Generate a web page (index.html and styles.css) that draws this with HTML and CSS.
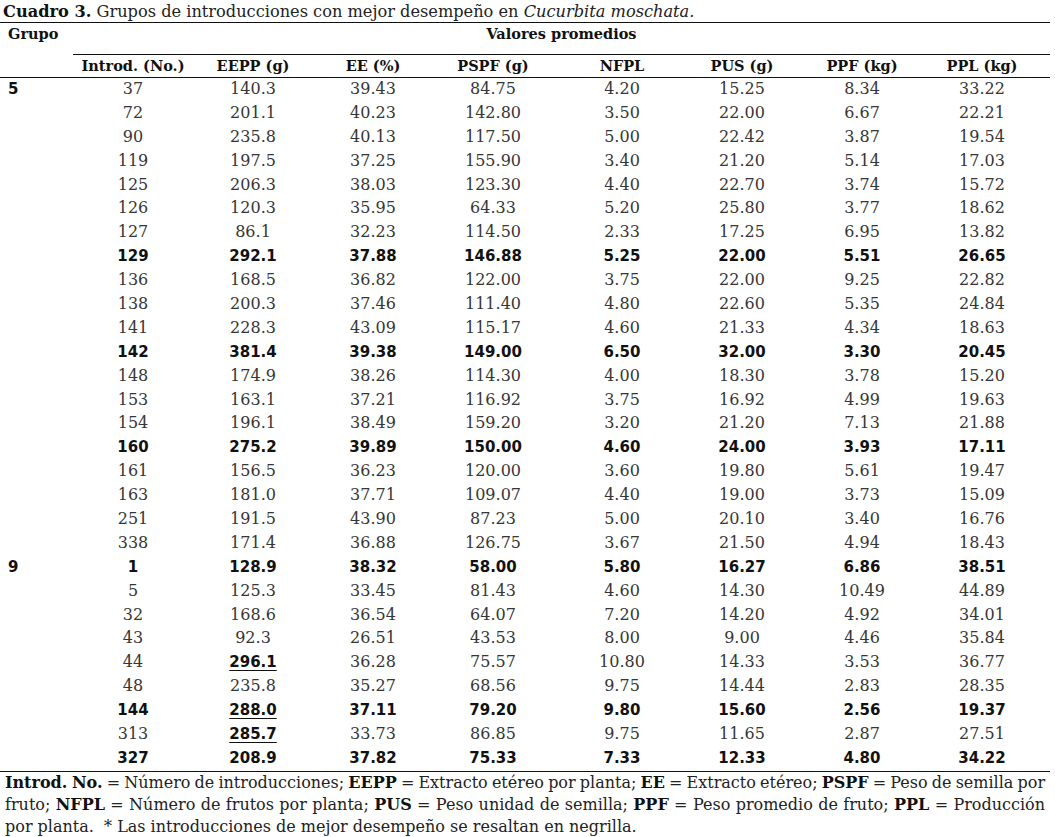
FILE: index.html
```html
<!DOCTYPE html>
<html lang="es">
<head>
<meta charset="utf-8">
<title>Cuadro 3</title>
<link rel="stylesheet" href="styles.css">
</head>
<body>
<div class="page">
  <p class="caption"><b>Cuadro 3.</b> Grupos de introducciones con mejor desempeño en <i>Cucurbita moschata.</i></p>
  <div class="head">
    <div class="grupo">Grupo</div>
    <div class="vp">Valores promedios</div>
    <div class="hc c1">Introd. (No.)</div>
    <div class="hc">EEPP (g)</div>
    <div class="hc">EE (%)</div>
    <div class="hc">PSPF (g)</div>
    <div class="hc sh">NFPL</div>
    <div class="hc">PUS (g)</div>
    <div class="hc">PPF (kg)</div>
    <div class="hc">PPL (kg)</div>
  </div>
  <div class="body">
    <div class="row"><span class="g">5</span><span>37</span><span>140.3</span><span>39.43</span><span>84.75</span><span>4.20</span><span>15.25</span><span>8.34</span><span>33.22</span></div>
    <div class="row"><span class="g"></span><span>72</span><span>201.1</span><span>40.23</span><span>142.80</span><span>3.50</span><span>22.00</span><span>6.67</span><span>22.21</span></div>
    <div class="row"><span class="g"></span><span>90</span><span>235.8</span><span>40.13</span><span>117.50</span><span>5.00</span><span>22.42</span><span>3.87</span><span>19.54</span></div>
    <div class="row"><span class="g"></span><span>119</span><span>197.5</span><span>37.25</span><span>155.90</span><span>3.40</span><span>21.20</span><span>5.14</span><span>17.03</span></div>
    <div class="row"><span class="g"></span><span>125</span><span>206.3</span><span>38.03</span><span>123.30</span><span>4.40</span><span>22.70</span><span>3.74</span><span>15.72</span></div>
    <div class="row"><span class="g"></span><span>126</span><span>120.3</span><span>35.95</span><span>64.33</span><span>5.20</span><span>25.80</span><span>3.77</span><span>18.62</span></div>
    <div class="row"><span class="g"></span><span>127</span><span>86.1</span><span>32.23</span><span>114.50</span><span>2.33</span><span>17.25</span><span>6.95</span><span>13.82</span></div>
    <div class="row b"><span class="g"></span><span>129</span><span>292.1</span><span>37.88</span><span>146.88</span><span>5.25</span><span>22.00</span><span>5.51</span><span>26.65</span></div>
    <div class="row"><span class="g"></span><span>136</span><span>168.5</span><span>36.82</span><span>122.00</span><span>3.75</span><span>22.00</span><span>9.25</span><span>22.82</span></div>
    <div class="row"><span class="g"></span><span>138</span><span>200.3</span><span>37.46</span><span>111.40</span><span>4.80</span><span>22.60</span><span>5.35</span><span>24.84</span></div>
    <div class="row"><span class="g"></span><span>141</span><span>228.3</span><span>43.09</span><span>115.17</span><span>4.60</span><span>21.33</span><span>4.34</span><span>18.63</span></div>
    <div class="row b"><span class="g"></span><span>142</span><span>381.4</span><span>39.38</span><span>149.00</span><span>6.50</span><span>32.00</span><span>3.30</span><span>20.45</span></div>
    <div class="row"><span class="g"></span><span>148</span><span>174.9</span><span>38.26</span><span>114.30</span><span>4.00</span><span>18.30</span><span>3.78</span><span>15.20</span></div>
    <div class="row"><span class="g"></span><span>153</span><span>163.1</span><span>37.21</span><span>116.92</span><span>3.75</span><span>16.92</span><span>4.99</span><span>19.63</span></div>
    <div class="row"><span class="g"></span><span>154</span><span>196.1</span><span>38.49</span><span>159.20</span><span>3.20</span><span>21.20</span><span>7.13</span><span>21.88</span></div>
    <div class="row b"><span class="g"></span><span>160</span><span>275.2</span><span>39.89</span><span>150.00</span><span>4.60</span><span>24.00</span><span>3.93</span><span>17.11</span></div>
    <div class="row"><span class="g"></span><span>161</span><span>156.5</span><span>36.23</span><span>120.00</span><span>3.60</span><span>19.80</span><span>5.61</span><span>19.47</span></div>
    <div class="row"><span class="g"></span><span>163</span><span>181.0</span><span>37.71</span><span>109.07</span><span>4.40</span><span>19.00</span><span>3.73</span><span>15.09</span></div>
    <div class="row"><span class="g"></span><span>251</span><span>191.5</span><span>43.90</span><span>87.23</span><span>5.00</span><span>20.10</span><span>3.40</span><span>16.76</span></div>
    <div class="row"><span class="g"></span><span>338</span><span>171.4</span><span>36.88</span><span>126.75</span><span>3.67</span><span>21.50</span><span>4.94</span><span>18.43</span></div>
    <div class="row b"><span class="g">9</span><span>1</span><span>128.9</span><span>38.32</span><span>58.00</span><span>5.80</span><span>16.27</span><span>6.86</span><span>38.51</span></div>
    <div class="row"><span class="g"></span><span>5</span><span>125.3</span><span>33.45</span><span>81.43</span><span>4.60</span><span>14.30</span><span>10.49</span><span>44.89</span></div>
    <div class="row"><span class="g"></span><span>32</span><span>168.6</span><span>36.54</span><span>64.07</span><span>7.20</span><span>14.20</span><span>4.92</span><span>34.01</span></div>
    <div class="row"><span class="g"></span><span>43</span><span>92.3</span><span>26.51</span><span>43.53</span><span>8.00</span><span>9.00</span><span>4.46</span><span>35.84</span></div>
    <div class="row"><span class="g"></span><span>44</span><span class="u">296.1</span><span>36.28</span><span>75.57</span><span>10.80</span><span>14.33</span><span>3.53</span><span>36.77</span></div>
    <div class="row"><span class="g"></span><span>48</span><span>235.8</span><span>35.27</span><span>68.56</span><span>9.75</span><span>14.44</span><span>2.83</span><span>28.35</span></div>
    <div class="row b"><span class="g"></span><span>144</span><span class="u">288.0</span><span>37.11</span><span>79.20</span><span>9.80</span><span>15.60</span><span>2.56</span><span>19.37</span></div>
    <div class="row"><span class="g"></span><span>313</span><span class="u">285.7</span><span>33.73</span><span>86.85</span><span>9.75</span><span>11.65</span><span>2.87</span><span>27.51</span></div>
    <div class="row b"><span class="g"></span><span>327</span><span>208.9</span><span>37.82</span><span>75.33</span><span>7.33</span><span>12.33</span><span>4.80</span><span>34.22</span></div>
  </div>
  <div class="notes">
    <div class="jl"><b>Introd. No.</b> = Número de introducciones; <b>EEPP</b> = Extracto etéreo por planta; <b>EE</b> = Extracto etéreo; <b>PSPF</b> = Peso de semilla por</div>
    <div class="jl">fruto; <b>NFPL</b> = Número de frutos por planta; <b>PUS</b> = Peso unidad de semilla; <b>PPF</b> = Peso promedio de fruto; <b>PPL</b> = Producción</div>
    <div>por planta.&nbsp; * Las introducciones de mejor desempeño se resaltan en negrilla.</div>
  </div>
</div>
</body>
</html>
```

FILE: styles.css
```css
html, body {
  margin: 0;
  padding: 0;
  background: #ffffff;
}

.page {
  width: 1050px;
  font-family: "DejaVu Serif", "Liberation Serif", serif;
  color: #2b2b2b;
}

.caption {
  margin: 0;
  height: 22px;
  padding-left: 3px;
  font-size: 16.2px;
  line-height: 23px;
  color: #222;
  white-space: nowrap;
}

.caption b {
  color: #111;
}

.head {
  display: grid;
  grid-template-columns: 73px repeat(4, 120px) 129px repeat(3, 120px) 1fr;
  grid-template-rows: 32px 22px;
  border-top: 1px solid #111;
  border-bottom: 1px solid #111;
  font-weight: bold;
  font-size: 14.5px;
  line-height: 22px;
  color: #111;
}

.grupo {
  grid-row: 1 / 3;
  grid-column: 1;
  padding-left: 8px;
}

.vp {
  grid-row: 1;
  grid-column: 2 / -1;
  text-align: center;
  border-bottom: 1px solid #111;
}

.hc {
  grid-row: 2;
  text-align: center;
}

.hc.c1 {
  grid-column: 2;
}

.hc.sh {
  padding-left: 9px;
}

.body {
  border-bottom: 1px solid #111;
}

.row {
  display: grid;
  grid-template-columns: 73px repeat(4, 120px) 129px repeat(3, 120px) 1fr;
  height: 23.9px;
  font-size: 16px;
  line-height: 22px;
  color: #363636;
}

.row > span {
  text-align: center;
  white-space: nowrap;
}

.row > span:nth-child(6) {
  padding-left: 9px;
}

.row > .g {
  text-align: left;
  padding-left: 8px;
  font-family: "DejaVu Sans", "Liberation Sans", sans-serif;
  font-weight: bold;
  font-size: 15px;
  color: #111;
}

.row.b > span,
.row > .u {
  font-family: "DejaVu Sans", "Liberation Sans", sans-serif;
  font-weight: bold;
  font-size: 15px;
  color: #111;
}

.row > .u {
  text-decoration: underline;
  text-decoration-thickness: 1px;
  text-underline-offset: 3px;
}

.notes {
  padding: 0 5px;
  font-size: 16px;
  line-height: 22px;
  color: #222;
}

.notes b {
  color: #111;
}

.jl {
  text-align: justify;
  text-align-last: justify;
  word-spacing: -2px;
  white-space: nowrap;
}
```
